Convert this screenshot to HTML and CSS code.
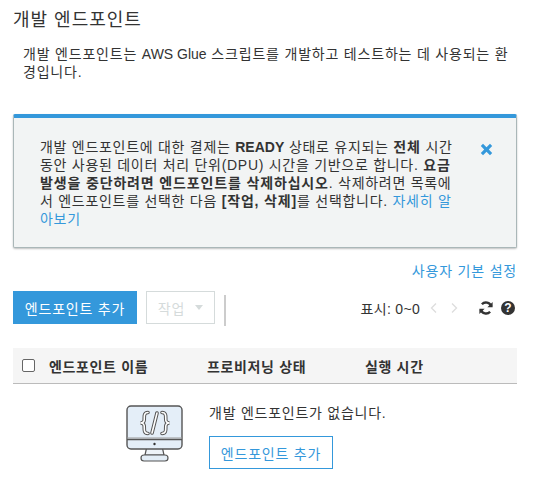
FILE: index.html
```html
<!DOCTYPE html>
<html lang="ko">
  <head>
    <meta charset="UTF-8" />
    <title>개발 엔드포인트</title>
    <link rel="stylesheet" href="styles.css">
  </head>
  <body>
    <h1 class="page-title">개발 엔드포인트</h1>
    <p class="page-desc">개발 엔드포인트는 <span class="latin">AWS Glue</span> 스크립트를 개발하고 테스트하는 데 사용되는 환경입니다.</p>

    <div class="alert">
      <p class="alert-text">
        개발 엔드포인트에 대한 결제는 <b class="latin">READY</b> 상태로 유지되는 <b>전체</b> 시간 동안 사용된 데이터 처리 단위(DPU) 시간을 기반으로 합니다. <b>요금 발생을 중단하려면 엔드포인트를 삭제하십시오</b>. 삭제하려면 목록에서 엔드포인트를 선택한 다음 <b>[작업, 삭제]</b>를 선택합니다. <a href="#">자세히 알아보기</a>
      </p>
      <svg class="alert-close" width="13" height="13" viewBox="0 0 13 13">
        <path d="M3 0.8L6.5 4.2L10 0.8L12.2 3L8.8 6.5L12.2 10L10 12.2L6.5 8.8L3 12.2L0.8 10L4.2 6.5L0.8 3Z" fill="#3498db" />
      </svg>
    </div>

    <div class="prefs"><a href="#">사용자 기본 설정</a></div>

    <div class="toolbar">
      <button class="btn btn-primary">엔드포인트 추가</button>
      <button class="btn btn-disabled">작업<span class="caret"></span></button>
      <span class="divider"></span>
      <div class="pager">
        <span class="pager-label">표시: 0~0</span>
        <svg width="7" height="12" viewBox="0 0 7 12"><path d="M6 1.5L1.5 6L6 10.500" fill="none" stroke="#ddd" stroke-width="1.3" /></svg>
        <svg class="pager-next" width="7" height="12" viewBox="0 0 7 12"><path d="M1 1.5L5.500 6L1 10.500" fill="none" stroke="#ddd" stroke-width="1.3" /></svg>
        <svg class="refresh" width="14" height="14" viewBox="0 0 14 14">
          <path d="M12.2 5.4A5.5 5.5 0 0 0 2.9 3.3" fill="none" stroke="#333" stroke-width="2.4" />
          <path d="M13.6 0.9V6.2H8.4Z" fill="#333" />
          <path d="M1.8 8.6A5.5 5.5 0 0 0 11.1 10.7" fill="none" stroke="#333" stroke-width="2.4" />
          <path d="M0.4 13.1V7.8H5.6Z" fill="#333" />
        </svg>
        <span class="help">?</span>
      </div>
    </div>

    <div class="table-head">
      <span class="col-check"><span class="checkbox"></span></span>
      <span class="col-name">엔드포인트 이름</span>
      <span class="col-state">프로비저닝 상태</span>
      <span class="col-time">실행 시간</span>
    </div>

    <div class="empty">
      <svg class="empty-icon" width="58" height="58" viewBox="0 0 58 58">
        <path d="M21 41L19 50H38L36 41Z" fill="#eef3f8" stroke="#555" stroke-width="1.2" />
        <rect x="15" y="50" width="27" height="6" rx="3" fill="#e3edf6" stroke="#555" stroke-width="1.2" />
        <rect x="1" y="1" width="55" height="43" rx="4" fill="#e4eef8" stroke="#555" stroke-width="1.4" />
        <path d="M1 34.500H56" stroke="#555" stroke-width="1.4" />
        <path d="M1 33H56" stroke="#999" stroke-width="1" />
        <circle cx="28.500" cy="39" r="1.2" fill="#333" />
        <path class="code-line" d="M22 7.500C16.500 7.500 19 14 18 16C17.500 17.500 16 18 14.500 18C16 18 17.500 18.500 18 20C19 22 16.500 28.500 22 28.500" />
        <path class="code-line" d="M36 7.500C41.500 7.500 39 14 40 16C40.500 17.500 42 18 43.500 18C42 18 40.500 18.500 40 20C39 22 41.500 28.500 36 28.500" />
        <path class="code-line" d="M31 8L26 28" />
        <path class="code-fill" d="M22 7.500C16.500 7.500 19 14 18 16C17.500 17.500 16 18 14.500 18C16 18 17.500 18.500 18 20C19 22 16.500 28.500 22 28.500" />
        <path class="code-fill" d="M36 7.500C41.500 7.500 39 14 40 16C40.500 17.500 42 18 43.500 18C42 18 40.500 18.500 40 20C39 22 41.500 28.500 36 28.500" />
        <path class="code-fill" d="M31 8L26 28" />
      </svg>
      <div class="empty-body">
        <p class="empty-text">개발 엔드포인트가 없습니다.</p>
        <button class="btn btn-outline">엔드포인트 추가</button>
      </div>
    </div>
  </body>
</html>
```

FILE: styles.css
```css
* {
  margin: 0;
  padding: 0;
  box-sizing: border-box;
}

body {
  font-family: "Liberation Sans", "Noto Sans CJK KR", sans-serif;
  font-size: 14px;
  letter-spacing: 0.65px;
  color: #333;
  background: #fff;
  padding: 10px 16px 0 13px;
}

a {
  color: #3498db;
  text-decoration: none;
}

b {
  letter-spacing: 0.85px;
}

.latin {
  letter-spacing: 0;
}

.page-title {
  font-size: 18px;
  font-weight: 400;
  letter-spacing: 1px;
  line-height: 21px;
}

.page-desc {
  line-height: 18px;
  margin-top: 14px;
  padding: 0 0 0 10px;
  letter-spacing: 0.8px;
}

.alert {
  display: flex;
  align-items: flex-start;
  justify-content: space-between;
  margin-top: 33px;
  height: 134px;
  padding: 20px 23px 0 26px;
  background: #f2f4f4;
  border: 1px solid #aab7b8;
  border-top: 4px solid #3498db;
  border-radius: 2px;
  box-shadow: 0 1px 2px rgba(0, 0, 0, 0.25);
}

.alert-text {
  width: 418px;
  line-height: 18px;
  letter-spacing: 0.72px;
}

.alert-close {
  margin-top: 5px;
}

.prefs {
  margin-top: 14px;
  text-align: right;
  line-height: 18px;
  letter-spacing: 0.8px;
}

.toolbar {
  display: flex;
  align-items: flex-start;
  margin-top: 11px;
}

.btn {
  font-family: inherit;
  font-size: 14px;
  letter-spacing: 0.8px;
  height: 33px;
  border-radius: 0;
}

.btn-primary {
  width: 124px;
  background: #3498db;
  color: #fff;
  border: none;
}

.btn-disabled {
  display: flex;
  align-items: center;
  justify-content: center;
  width: 69px;
  margin-left: 9px;
  background: #fff;
  color: #d5dbdb;
  border: 1px solid #d5dbdb;
}

.caret {
  margin-left: 10px;
  border-top: 5px solid #d5dbdb;
  border-left: 4.5px solid transparent;
  border-right: 4.5px solid transparent;
}

.divider {
  width: 2px;
  height: 31px;
  margin: 4px 0 0 9px;
  background: #ccc;
}

.pager {
  display: flex;
  align-items: center;
  height: 33px;
  margin-left: auto;
  padding-right: 2px;
}

.pager-label {
  margin-right: 10px;
  letter-spacing: 0.3px;
}

.pager-next {
  margin-left: 14px;
}

.refresh {
  margin-left: 21px;
}

.help {
  width: 14px;
  height: 14px;
  margin-left: 8px;
  border-radius: 50%;
  background: #333;
  color: #fff;
  font-size: 12px;
  font-weight: 700;
  letter-spacing: 0;
  line-height: 14px;
  text-align: center;
}

.table-head {
  display: flex;
  align-items: center;
  height: 36px;
  margin-top: 22px;
  background: #f5f5f5;
  border-bottom: 1px solid #bbb;
  font-weight: 700;
}

.col-check {
  display: flex;
  width: 36px;
  padding-left: 9px;
}

.checkbox {
  width: 13px;
  height: 13px;
  background: #fff;
  border: 1px solid #666;
  border-radius: 2px;
}

.col-name {
  width: 158px;
}

.col-state {
  width: 158px;
}

.empty {
  display: flex;
  margin-top: 20px;
  padding-left: 113px;
}

.empty-icon {
  margin-top: 1px;
}

.empty-body {
  margin-left: 25px;
}

.empty-text {
  line-height: 18px;
  letter-spacing: 0.75px;
}

.btn-outline {
  width: 124px;
  margin-top: 14px;
  background: #fff;
  color: #3498db;
  border: 1px solid #3498db;
}

.code-line {
  fill: none;
  stroke: #555;
  stroke-width: 3.6;
  stroke-linecap: round;
}

.code-fill {
  fill: none;
  stroke: #fff;
  stroke-width: 1.6;
  stroke-linecap: round;
}
```
